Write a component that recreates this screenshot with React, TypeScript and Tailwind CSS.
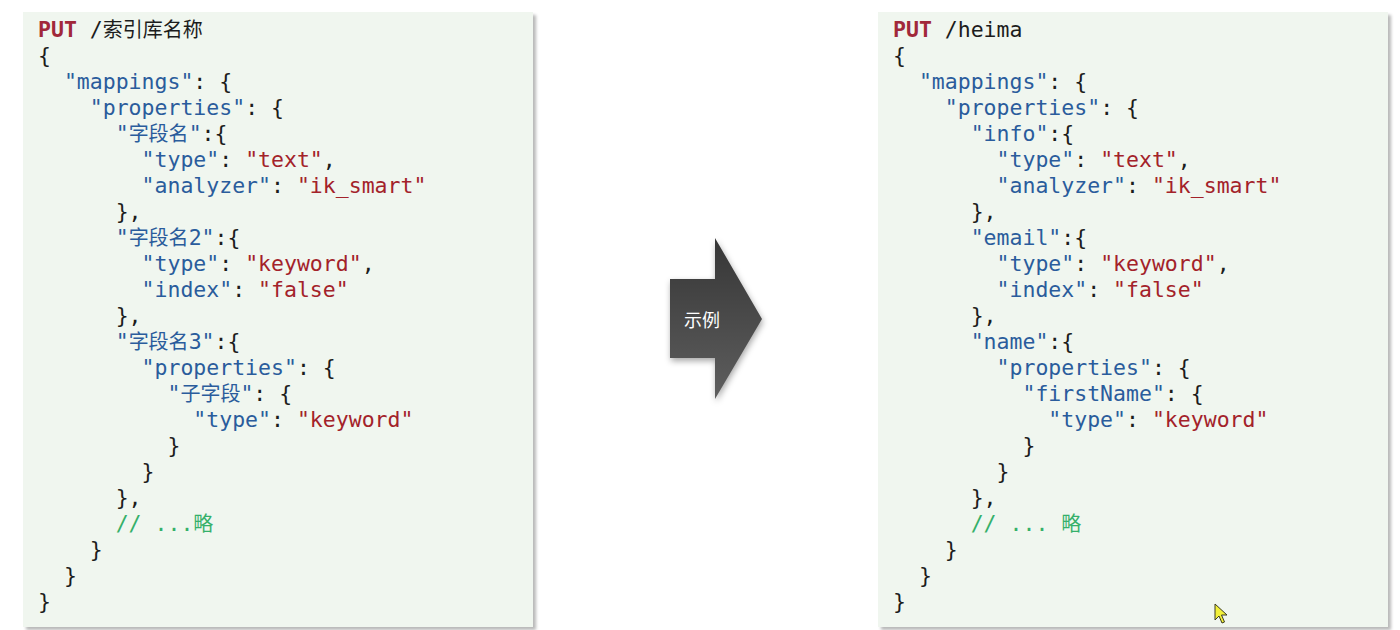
import React from 'react';

type Tok = [string, 'p' | 'k' | 's' | 'c' | 't'];

const mono = "font-['DejaVu_Sans_Mono','Noto_Sans_CJK_SC',monospace]";

const colorOf: Record<Tok[1], string> = {
  p: 'text-[#a1283a] font-bold',
  k: 'text-[#2a5c9c]',
  s: 'text-[#a3222a]',
  c: 'text-[#35b06a]',
  t: 'text-[#1c1c1c]',
};

// split CJK runs so they can be sized a bit smaller, like the reference
const Piece: React.FC<{ text: string }> = ({ text }) => {
  const parts = text.split(/([\u4e00-\u9fff]+)/);
  return (
    <>
      {parts.map((p, i) =>
        /[\u4e00-\u9fff]/.test(p) ? (
          <span key={i} className="text-[20px]">{p}</span>
        ) : (
          <React.Fragment key={i}>{p}</React.Fragment>
        )
      )}
    </>
  );
};

const leftLines: Tok[][] = [
  [['PUT', 'p'], [' /索引库名称', 't']],
  [['{', 't']],
  [['  ', 't'], ['"mappings"', 'k'], [': {', 't']],
  [['    ', 't'], ['"properties"', 'k'], [': {', 't']],
  [['      ', 't'], ['"字段名"', 'k'], [':{', 't']],
  [['        ', 't'], ['"type"', 'k'], [': ', 't'], ['"text"', 's'], [',', 't']],
  [['        ', 't'], ['"analyzer"', 'k'], [': ', 't'], ['"ik_smart"', 's']],
  [['      },', 't']],
  [['      ', 't'], ['"字段名2"', 'k'], [':{', 't']],
  [['        ', 't'], ['"type"', 'k'], [': ', 't'], ['"keyword"', 's'], [',', 't']],
  [['        ', 't'], ['"index"', 'k'], [': ', 't'], ['"false"', 's']],
  [['      },', 't']],
  [['      ', 't'], ['"字段名3"', 'k'], [':{', 't']],
  [['        ', 't'], ['"properties"', 'k'], [': {', 't']],
  [['          ', 't'], ['"子字段"', 'k'], [': {', 't']],
  [['            ', 't'], ['"type"', 'k'], [': ', 't'], ['"keyword"', 's']],
  [['          }', 't']],
  [['        }', 't']],
  [['      },', 't']],
  [['      ', 't'], ['// ...略', 'c']],
  [['    }', 't']],
  [['  }', 't']],
  [['}', 't']],
];

const rightLines: Tok[][] = [
  [['PUT', 'p'], [' /heima', 't']],
  [['{', 't']],
  [['  ', 't'], ['"mappings"', 'k'], [': {', 't']],
  [['    ', 't'], ['"properties"', 'k'], [': {', 't']],
  [['      ', 't'], ['"info"', 'k'], [':{', 't']],
  [['        ', 't'], ['"type"', 'k'], [': ', 't'], ['"text"', 's'], [',', 't']],
  [['        ', 't'], ['"analyzer"', 'k'], [': ', 't'], ['"ik_smart"', 's']],
  [['      },', 't']],
  [['      ', 't'], ['"email"', 'k'], [':{', 't']],
  [['        ', 't'], ['"type"', 'k'], [': ', 't'], ['"keyword"', 's'], [',', 't']],
  [['        ', 't'], ['"index"', 'k'], [': ', 't'], ['"false"', 's']],
  [['      },', 't']],
  [['      ', 't'], ['"name"', 'k'], [':{', 't']],
  [['        ', 't'], ['"properties"', 'k'], [': {', 't']],
  [['          ', 't'], ['"firstName"', 'k'], [': {', 't']],
  [['            ', 't'], ['"type"', 'k'], [': ', 't'], ['"keyword"', 's']],
  [['          }', 't']],
  [['        }', 't']],
  [['      },', 't']],
  [['      ', 't'], ['// ... 略', 'c']],
  [['    }', 't']],
  [['  }', 't']],
  [['}', 't']],
];

const CodePanel: React.FC<{ lines: Tok[][]; children?: React.ReactNode }> = ({ lines, children }) => (
  <div className={`relative w-[510px] h-[615px] shrink-0 bg-[#f0f6ef] shadow-[3px_3px_3px_rgba(0,0,0,0.28)] pt-[5px] pl-[15px] ${mono} text-[21.5px] leading-[26px]`}>
    {lines.map((line, i) => (
      <div key={i} className="whitespace-pre h-[26px]">
        {line.map(([text, kind], j) => (
          <span key={j} className={colorOf[kind]}>
            <Piece text={text} />
          </span>
        ))}
      </div>
    ))}
    {children}
  </div>
);

const Arrow: React.FC = () => (
  <div className="relative w-[96px] h-[166px] shrink-0">
    <svg width="96" height="166" viewBox="0 0 96 166" className="drop-shadow-[1px_3px_3px_rgba(0,0,0,0.35)]">
      <defs>
        <linearGradient id="arrowFill" x1="0" y1="0" x2="0" y2="1">
          <stop offset="0" stopColor="#363636" />
          <stop offset="1" stopColor="#5e5e5e" />
        </linearGradient>
      </defs>
      <polygon points="0,42 45,42 45,1 92,82 45,162 45,121 0,121" fill="url(#arrowFill)" />
    </svg>
    <span className="absolute left-[14px] top-[70px] text-white text-[18px] leading-[24px] font-['Noto_Sans_CJK_SC',sans-serif]">
      示例
    </span>
  </div>
);

const Cursor: React.FC = () => (
  <svg width="16" height="22" viewBox="0 0 16 22" className="absolute left-[336px] top-[591px]">
    <path d="M1 1 L1 17 L5 13 L8 20 L10.5 19 L7.5 12 L13 12 Z" fill="#f2f03a" stroke="#3a3a20" strokeWidth="1" strokeLinejoin="round" />
  </svg>
);

export default function App() {
  return (
    <div className="w-[1400px] h-[630px] bg-white overflow-hidden">
      <div className="flex items-center pt-[12px] pl-[23px]">
        <CodePanel lines={leftLines} />
        <div className="ml-[137px]">
          <Arrow />
        </div>
        <div className="ml-[112px]">
          <CodePanel lines={rightLines}>
            <Cursor />
          </CodePanel>
        </div>
      </div>
    </div>
  );
}
